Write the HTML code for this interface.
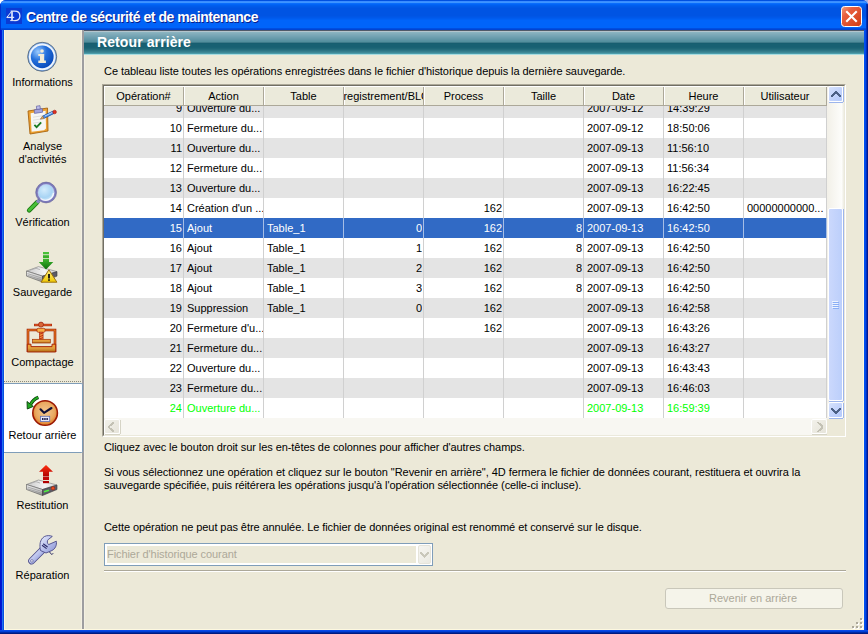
<!DOCTYPE html>
<html><head><meta charset="utf-8"><style>
*{box-sizing:border-box}
html,body{margin:0;padding:0;background:#fff;width:868px;height:634px;overflow:hidden}
body{font-family:"Liberation Sans",sans-serif;font-size:11px;line-height:13px;color:#000;position:relative}
.a{position:absolute}
#win{position:absolute;left:0;top:0;width:868px;height:634px;background:#0831d9;border-radius:6px 6px 0 0;overflow:hidden}
#title{position:absolute;left:0;top:0;width:868px;height:30px;background:linear-gradient(to bottom,#0050e0 0px,#0050e0 1px,#3a8cff 1px,#3a8cff 2px,#3d95ff 2px,#3d95ff 3px,#0a6cfc 3px,#0a6cfc 4px,#0064f6 4px,#0064f6 5px,#005eee 5px,#005eee 6px,#005aea 6px,#005aea 7px,#0057e6 7px,#0057e6 8px,#0054e3 8px,#0054e3 9px,#0054e3 9px,#0054e3 10px,#0054e3 10px,#0054e3 11px,#0054e3 11px,#0054e3 12px,#0054e3 12px,#0054e3 13px,#0054e3 13px,#0054e3 14px,#0054e3 14px,#0054e3 15px,#0054e3 15px,#0054e3 16px,#0056e6 16px,#0056e6 17px,#0058ea 17px,#0058ea 18px,#005cee 18px,#005cee 19px,#0060f4 19px,#0060f4 20px,#0064fa 20px,#0064fa 21px,#0064fa 21px,#0064fa 22px,#0064fa 22px,#0064fa 23px,#0064fa 23px,#0064fa 24px,#0064fa 24px,#0064fa 25px,#0064fa 25px,#0064fa 26px,#0064fa 26px,#0064fa 27px,#0064fa 27px,#0064fa 28px,#004ee0 28px,#004ee0 29px,#0044d4 29px,#0044d4 30px)}
#lframe{position:absolute;left:0;top:30px;width:4px;height:604px;background:linear-gradient(to right,#0014cc 0px,#0014cc 1px,#0018d4 1px,#0018d4 2px,#2070f0 2px,#2070f0 3px,#0850e0 3px)}
#rframe{position:absolute;left:864px;top:30px;width:4px;height:604px;background:linear-gradient(to right,#0050f0 0px,#0050f0 1px,#0048e8 1px,#0048e8 2px,#0030c0 2px,#0030c0 3px,#001890 3px)}
#bframe{position:absolute;left:0;top:630px;width:868px;height:4px;background:linear-gradient(to bottom,#0a4ae8 0px,#0a4ae8 1px,#0040d8 1px,#0040d8 2px,#002aa8 2px,#002aa8 3px,#001a80 3px)}
#content{position:absolute;left:4px;top:30px;width:860px;height:600px;background:#ece9d8}
.slabel{position:absolute;left:4px;width:77px;text-align:center;white-space:nowrap}
.txt{position:absolute;white-space:nowrap}
#table{position:absolute;left:102px;top:84px;width:744px;height:353px;background:#fff;
 border-left:1px solid #aca899;border-top:1px solid #aca899;border-right:1px solid #fff;border-bottom:1px solid #fff}
#tin{position:absolute;left:0;top:0;width:742px;height:351px;border-left:1px solid #716f64;border-top:1px solid #716f64;border-right:1px solid #ebe9dc;border-bottom:1px solid #ebe9dc}
#hdr{position:absolute;left:104px;top:86px;width:723px;height:20px;background:#ebeadb;border-top:1px solid #fff;overflow:hidden}
#hdr .hb{position:absolute;left:0;top:18px;width:723px;height:1px;background:#aca899}
.hc{position:absolute;top:-1px;height:19px;overflow:hidden}
.hc span{position:absolute;left:-60px;right:-60px;top:4px;text-align:center;white-space:nowrap}
.hs{position:absolute;top:-1px;width:1px;height:19px;background:#aca899}
.hw{position:absolute;top:-1px;width:1px;height:19px;background:#fff}
#rows{position:absolute;left:104px;top:106px;width:723px;height:312px;overflow:hidden;background:#fff}
.row{position:absolute;left:0;width:723px;height:20px}
.gl{position:absolute;top:0;width:1px;height:20px}
.cell{position:absolute;top:4px;height:13px;white-space:nowrap;overflow:hidden}
.cell.r{text-align:right}
</style></head><body>
<div class="a" style="left:856px;top:0;width:12px;height:8px;background:#a4b4e4"></div>
<div id="win">
 <div id="title"></div>
 <div id="lframe"></div><div id="rframe"></div><div id="bframe"></div>
 <div id="content"></div>
 <div class="a" style="left:0;top:4px;width:1px;height:26px;background:#0028c8;opacity:0.8"></div>
 <div class="a" style="left:866px;top:4px;width:1px;height:26px;background:#0030b8"></div>
 <div class="a" style="left:867px;top:4px;width:1px;height:26px;background:#001c88"></div>
</div>
<div class="txt" style="left:26px;top:9px;font:bold 14px/16px 'Liberation Sans';letter-spacing:-0.45px;color:#fff;text-shadow:1px 1px 0 #0a1e8a">Centre de sécurité et de maintenance</div>

<!-- sidebar -->
<div class="a" style="left:81px;top:30px;width:1px;height:600px;background:#f3f0e2"></div>
<div class="a" style="left:82px;top:30px;width:2px;height:600px;background:#9d9da0"></div>
<div class="a" style="left:84px;top:55px;width:1px;height:575px;background:#f3f0e2"></div>
<div class="a" style="left:4px;top:30px;width:1px;height:600px;background:#fdf8e0"></div>
<div class="a" style="left:863px;top:55px;width:1px;height:575px;background:#fdf8e0"></div>
<div class="a" style="left:4px;top:629px;width:860px;height:1px;background:#fdf8e0"></div>
<div class="a" style="left:4px;top:381px;width:78px;height:1px;background-image:linear-gradient(to right,#8c8a7c 50%,transparent 50%);background-size:2px 1px"></div>
<div class="a" style="left:4px;top:383px;width:79px;height:70px;background:#fff;border-top:1px solid #7f9db9;border-bottom:1px solid #7f9db9;border-right:1px solid #7f9db9;border-radius:0 2px 2px 0"></div>
<div class="slabel" style="top:76px">Informations</div>
<div class="slabel" style="top:140px">Analyse</div>
<div class="slabel" style="top:153px">d'activités</div>
<div class="slabel" style="top:216px">Vérification</div>
<div class="slabel" style="top:286px">Sauvegarde</div>
<div class="slabel" style="top:356px">Compactage</div>
<div class="slabel" style="top:429px">Retour arrière</div>
<div class="slabel" style="top:499px">Restitution</div>
<div class="slabel" style="top:569px">Réparation</div>

<!-- banner -->
<div class="a" style="left:84px;top:30px;width:780px;height:25px;background:linear-gradient(to bottom,#505a68 0px,#505a68 1px,#b4c4cc 1px,#b4c4cc 2px,#8ab4c0 2px,#8ab4c0 3px,#84aebc 3px,#84aebc 4px,#7eaab8 4px,#7eaab8 5px,#78a6b6 5px,#78a6b6 6px,#72a2b2 6px,#72a2b2 7px,#6c9eae 7px,#6c9eae 8px,#669aaa 8px,#669aaa 9px,#6096a6 9px,#6096a6 10px,#5a92a2 10px,#5a92a2 11px,#54909e 11px,#54909e 12px,#3e7a8a 12px,#3e7a8a 13px,#175e70 13px,#175e70 14px,#186072 14px,#186072 15px,#186072 15px,#186072 16px,#186072 16px,#186072 17px,#196274 17px,#196274 18px,#1e6676 18px,#1e6676 19px,#246c7c 19px,#246c7c 20px,#2c7484 20px,#2c7484 21px,#347e8c 21px,#347e8c 22px,#3e8896 22px,#3e8896 23px,#4a9caa 23px,#4a9caa 24px,#a8dce0 24px,#a8dce0 25px)"></div>
<div class="txt" style="left:97px;top:34px;font:bold 14px/16px 'Liberation Sans';letter-spacing:0.1px;color:#fff">Retour arrière</div>

<div class="txt" style="left:104px;top:65px;letter-spacing:-0.06px">Ce tableau liste toutes les opérations enregistrées dans le fichier d'historique depuis la dernière sauvegarde.</div>

<!-- table -->
<div id="table"><div id="tin"></div></div>
<div id="hdr"><div class="hw" style="left:0px"></div>
<div class="hc" style="left:0px;width:79px"><span>Opération#</span></div>
<div class="hs" style="left:79px"></div>
<div class="hw" style="left:80px"></div>
<div class="hc" style="left:80px;width:79px"><span>Action</span></div>
<div class="hs" style="left:159px"></div>
<div class="hw" style="left:160px"></div>
<div class="hc" style="left:160px;width:79px"><span>Table</span></div>
<div class="hs" style="left:239px"></div>
<div class="hw" style="left:240px"></div>
<div class="hc" style="left:240px;width:79px"><span>Enregistrement/BLOB</span></div>
<div class="hs" style="left:319px"></div>
<div class="hw" style="left:320px"></div>
<div class="hc" style="left:320px;width:79px"><span>Process</span></div>
<div class="hs" style="left:399px"></div>
<div class="hw" style="left:400px"></div>
<div class="hc" style="left:400px;width:79px"><span>Taille</span></div>
<div class="hs" style="left:479px"></div>
<div class="hw" style="left:480px"></div>
<div class="hc" style="left:480px;width:79px"><span>Date</span></div>
<div class="hs" style="left:559px"></div>
<div class="hw" style="left:560px"></div>
<div class="hc" style="left:560px;width:79px"><span>Heure</span></div>
<div class="hs" style="left:639px"></div>
<div class="hw" style="left:640px"></div>
<div class="hc" style="left:640px;width:82px"><span>Utilisateur</span></div>
<div class="hs" style="left:722px"></div><div class="hb"></div></div>
<div id="rows">
<div class="row" style="top:-8px;background:#e4e4e4;color:#000000">
<div class="gl" style="left:79px;background:#d0d0d0"></div>
<div class="cell r" style="left:0px;width:78px">9</div>
<div class="gl" style="left:159px;background:#d0d0d0"></div>
<div class="cell" style="left:83px;width:76px">Ouverture du...</div>
<div class="gl" style="left:239px;background:#d0d0d0"></div>
<div class="gl" style="left:319px;background:#d0d0d0"></div>
<div class="gl" style="left:399px;background:#d0d0d0"></div>
<div class="gl" style="left:479px;background:#d0d0d0"></div>
<div class="gl" style="left:559px;background:#d0d0d0"></div>
<div class="cell" style="left:483px;width:76px">2007-09-12</div>
<div class="gl" style="left:639px;background:#d0d0d0"></div>
<div class="cell" style="left:563px;width:76px">14:39:29</div>
<div class="gl" style="left:722px;background:#d0d0d0"></div>
</div>
<div class="row" style="top:12px;background:#ffffff;color:#000000">
<div class="gl" style="left:79px;background:#d0d0d0"></div>
<div class="cell r" style="left:0px;width:78px">10</div>
<div class="gl" style="left:159px;background:#d0d0d0"></div>
<div class="cell" style="left:83px;width:76px">Fermeture du...</div>
<div class="gl" style="left:239px;background:#d0d0d0"></div>
<div class="gl" style="left:319px;background:#d0d0d0"></div>
<div class="gl" style="left:399px;background:#d0d0d0"></div>
<div class="gl" style="left:479px;background:#d0d0d0"></div>
<div class="gl" style="left:559px;background:#d0d0d0"></div>
<div class="cell" style="left:483px;width:76px">2007-09-12</div>
<div class="gl" style="left:639px;background:#d0d0d0"></div>
<div class="cell" style="left:563px;width:76px">18:50:06</div>
<div class="gl" style="left:722px;background:#d0d0d0"></div>
</div>
<div class="row" style="top:32px;background:#e4e4e4;color:#000000">
<div class="gl" style="left:79px;background:#d0d0d0"></div>
<div class="cell r" style="left:0px;width:78px">11</div>
<div class="gl" style="left:159px;background:#d0d0d0"></div>
<div class="cell" style="left:83px;width:76px">Ouverture du...</div>
<div class="gl" style="left:239px;background:#d0d0d0"></div>
<div class="gl" style="left:319px;background:#d0d0d0"></div>
<div class="gl" style="left:399px;background:#d0d0d0"></div>
<div class="gl" style="left:479px;background:#d0d0d0"></div>
<div class="gl" style="left:559px;background:#d0d0d0"></div>
<div class="cell" style="left:483px;width:76px">2007-09-13</div>
<div class="gl" style="left:639px;background:#d0d0d0"></div>
<div class="cell" style="left:563px;width:76px">11:56:10</div>
<div class="gl" style="left:722px;background:#d0d0d0"></div>
</div>
<div class="row" style="top:52px;background:#ffffff;color:#000000">
<div class="gl" style="left:79px;background:#d0d0d0"></div>
<div class="cell r" style="left:0px;width:78px">12</div>
<div class="gl" style="left:159px;background:#d0d0d0"></div>
<div class="cell" style="left:83px;width:76px">Fermeture du...</div>
<div class="gl" style="left:239px;background:#d0d0d0"></div>
<div class="gl" style="left:319px;background:#d0d0d0"></div>
<div class="gl" style="left:399px;background:#d0d0d0"></div>
<div class="gl" style="left:479px;background:#d0d0d0"></div>
<div class="gl" style="left:559px;background:#d0d0d0"></div>
<div class="cell" style="left:483px;width:76px">2007-09-13</div>
<div class="gl" style="left:639px;background:#d0d0d0"></div>
<div class="cell" style="left:563px;width:76px">11:56:34</div>
<div class="gl" style="left:722px;background:#d0d0d0"></div>
</div>
<div class="row" style="top:72px;background:#e4e4e4;color:#000000">
<div class="gl" style="left:79px;background:#d0d0d0"></div>
<div class="cell r" style="left:0px;width:78px">13</div>
<div class="gl" style="left:159px;background:#d0d0d0"></div>
<div class="cell" style="left:83px;width:76px">Ouverture du...</div>
<div class="gl" style="left:239px;background:#d0d0d0"></div>
<div class="gl" style="left:319px;background:#d0d0d0"></div>
<div class="gl" style="left:399px;background:#d0d0d0"></div>
<div class="gl" style="left:479px;background:#d0d0d0"></div>
<div class="gl" style="left:559px;background:#d0d0d0"></div>
<div class="cell" style="left:483px;width:76px">2007-09-13</div>
<div class="gl" style="left:639px;background:#d0d0d0"></div>
<div class="cell" style="left:563px;width:76px">16:22:45</div>
<div class="gl" style="left:722px;background:#d0d0d0"></div>
</div>
<div class="row" style="top:92px;background:#ffffff;color:#000000">
<div class="gl" style="left:79px;background:#d0d0d0"></div>
<div class="cell r" style="left:0px;width:78px">14</div>
<div class="gl" style="left:159px;background:#d0d0d0"></div>
<div class="cell" style="left:83px;width:76px">Création d'un ...</div>
<div class="gl" style="left:239px;background:#d0d0d0"></div>
<div class="gl" style="left:319px;background:#d0d0d0"></div>
<div class="gl" style="left:399px;background:#d0d0d0"></div>
<div class="cell r" style="left:320px;width:78px">162</div>
<div class="gl" style="left:479px;background:#d0d0d0"></div>
<div class="gl" style="left:559px;background:#d0d0d0"></div>
<div class="cell" style="left:483px;width:76px">2007-09-13</div>
<div class="gl" style="left:639px;background:#d0d0d0"></div>
<div class="cell" style="left:563px;width:76px">16:42:50</div>
<div class="gl" style="left:722px;background:#d0d0d0"></div>
<div class="cell" style="left:643px;width:79px">00000000000...</div>
</div>
<div class="row" style="top:112px;background:#316ac5;color:#ffffff">
<div class="gl" style="left:79px;background:#a5bde5"></div>
<div class="cell r" style="left:0px;width:78px">15</div>
<div class="gl" style="left:159px;background:#a5bde5"></div>
<div class="cell" style="left:83px;width:76px">Ajout</div>
<div class="gl" style="left:239px;background:#a5bde5"></div>
<div class="cell" style="left:163px;width:76px">Table_1</div>
<div class="gl" style="left:319px;background:#a5bde5"></div>
<div class="cell r" style="left:240px;width:78px">0</div>
<div class="gl" style="left:399px;background:#a5bde5"></div>
<div class="cell r" style="left:320px;width:78px">162</div>
<div class="gl" style="left:479px;background:#a5bde5"></div>
<div class="cell r" style="left:400px;width:78px">8</div>
<div class="gl" style="left:559px;background:#a5bde5"></div>
<div class="cell" style="left:483px;width:76px">2007-09-13</div>
<div class="gl" style="left:639px;background:#a5bde5"></div>
<div class="cell" style="left:563px;width:76px">16:42:50</div>
<div class="gl" style="left:722px;background:#a5bde5"></div>
</div>
<div class="row" style="top:132px;background:#ffffff;color:#000000">
<div class="gl" style="left:79px;background:#d0d0d0"></div>
<div class="cell r" style="left:0px;width:78px">16</div>
<div class="gl" style="left:159px;background:#d0d0d0"></div>
<div class="cell" style="left:83px;width:76px">Ajout</div>
<div class="gl" style="left:239px;background:#d0d0d0"></div>
<div class="cell" style="left:163px;width:76px">Table_1</div>
<div class="gl" style="left:319px;background:#d0d0d0"></div>
<div class="cell r" style="left:240px;width:78px">1</div>
<div class="gl" style="left:399px;background:#d0d0d0"></div>
<div class="cell r" style="left:320px;width:78px">162</div>
<div class="gl" style="left:479px;background:#d0d0d0"></div>
<div class="cell r" style="left:400px;width:78px">8</div>
<div class="gl" style="left:559px;background:#d0d0d0"></div>
<div class="cell" style="left:483px;width:76px">2007-09-13</div>
<div class="gl" style="left:639px;background:#d0d0d0"></div>
<div class="cell" style="left:563px;width:76px">16:42:50</div>
<div class="gl" style="left:722px;background:#d0d0d0"></div>
</div>
<div class="row" style="top:152px;background:#e4e4e4;color:#000000">
<div class="gl" style="left:79px;background:#d0d0d0"></div>
<div class="cell r" style="left:0px;width:78px">17</div>
<div class="gl" style="left:159px;background:#d0d0d0"></div>
<div class="cell" style="left:83px;width:76px">Ajout</div>
<div class="gl" style="left:239px;background:#d0d0d0"></div>
<div class="cell" style="left:163px;width:76px">Table_1</div>
<div class="gl" style="left:319px;background:#d0d0d0"></div>
<div class="cell r" style="left:240px;width:78px">2</div>
<div class="gl" style="left:399px;background:#d0d0d0"></div>
<div class="cell r" style="left:320px;width:78px">162</div>
<div class="gl" style="left:479px;background:#d0d0d0"></div>
<div class="cell r" style="left:400px;width:78px">8</div>
<div class="gl" style="left:559px;background:#d0d0d0"></div>
<div class="cell" style="left:483px;width:76px">2007-09-13</div>
<div class="gl" style="left:639px;background:#d0d0d0"></div>
<div class="cell" style="left:563px;width:76px">16:42:50</div>
<div class="gl" style="left:722px;background:#d0d0d0"></div>
</div>
<div class="row" style="top:172px;background:#ffffff;color:#000000">
<div class="gl" style="left:79px;background:#d0d0d0"></div>
<div class="cell r" style="left:0px;width:78px">18</div>
<div class="gl" style="left:159px;background:#d0d0d0"></div>
<div class="cell" style="left:83px;width:76px">Ajout</div>
<div class="gl" style="left:239px;background:#d0d0d0"></div>
<div class="cell" style="left:163px;width:76px">Table_1</div>
<div class="gl" style="left:319px;background:#d0d0d0"></div>
<div class="cell r" style="left:240px;width:78px">3</div>
<div class="gl" style="left:399px;background:#d0d0d0"></div>
<div class="cell r" style="left:320px;width:78px">162</div>
<div class="gl" style="left:479px;background:#d0d0d0"></div>
<div class="cell r" style="left:400px;width:78px">8</div>
<div class="gl" style="left:559px;background:#d0d0d0"></div>
<div class="cell" style="left:483px;width:76px">2007-09-13</div>
<div class="gl" style="left:639px;background:#d0d0d0"></div>
<div class="cell" style="left:563px;width:76px">16:42:50</div>
<div class="gl" style="left:722px;background:#d0d0d0"></div>
</div>
<div class="row" style="top:192px;background:#e4e4e4;color:#000000">
<div class="gl" style="left:79px;background:#d0d0d0"></div>
<div class="cell r" style="left:0px;width:78px">19</div>
<div class="gl" style="left:159px;background:#d0d0d0"></div>
<div class="cell" style="left:83px;width:76px">Suppression</div>
<div class="gl" style="left:239px;background:#d0d0d0"></div>
<div class="cell" style="left:163px;width:76px">Table_1</div>
<div class="gl" style="left:319px;background:#d0d0d0"></div>
<div class="cell r" style="left:240px;width:78px">0</div>
<div class="gl" style="left:399px;background:#d0d0d0"></div>
<div class="cell r" style="left:320px;width:78px">162</div>
<div class="gl" style="left:479px;background:#d0d0d0"></div>
<div class="gl" style="left:559px;background:#d0d0d0"></div>
<div class="cell" style="left:483px;width:76px">2007-09-13</div>
<div class="gl" style="left:639px;background:#d0d0d0"></div>
<div class="cell" style="left:563px;width:76px">16:42:58</div>
<div class="gl" style="left:722px;background:#d0d0d0"></div>
</div>
<div class="row" style="top:212px;background:#ffffff;color:#000000">
<div class="gl" style="left:79px;background:#d0d0d0"></div>
<div class="cell r" style="left:0px;width:78px">20</div>
<div class="gl" style="left:159px;background:#d0d0d0"></div>
<div class="cell" style="left:83px;width:76px">Fermeture d'u...</div>
<div class="gl" style="left:239px;background:#d0d0d0"></div>
<div class="gl" style="left:319px;background:#d0d0d0"></div>
<div class="gl" style="left:399px;background:#d0d0d0"></div>
<div class="cell r" style="left:320px;width:78px">162</div>
<div class="gl" style="left:479px;background:#d0d0d0"></div>
<div class="gl" style="left:559px;background:#d0d0d0"></div>
<div class="cell" style="left:483px;width:76px">2007-09-13</div>
<div class="gl" style="left:639px;background:#d0d0d0"></div>
<div class="cell" style="left:563px;width:76px">16:43:26</div>
<div class="gl" style="left:722px;background:#d0d0d0"></div>
</div>
<div class="row" style="top:232px;background:#e4e4e4;color:#000000">
<div class="gl" style="left:79px;background:#d0d0d0"></div>
<div class="cell r" style="left:0px;width:78px">21</div>
<div class="gl" style="left:159px;background:#d0d0d0"></div>
<div class="cell" style="left:83px;width:76px">Fermeture du...</div>
<div class="gl" style="left:239px;background:#d0d0d0"></div>
<div class="gl" style="left:319px;background:#d0d0d0"></div>
<div class="gl" style="left:399px;background:#d0d0d0"></div>
<div class="gl" style="left:479px;background:#d0d0d0"></div>
<div class="gl" style="left:559px;background:#d0d0d0"></div>
<div class="cell" style="left:483px;width:76px">2007-09-13</div>
<div class="gl" style="left:639px;background:#d0d0d0"></div>
<div class="cell" style="left:563px;width:76px">16:43:27</div>
<div class="gl" style="left:722px;background:#d0d0d0"></div>
</div>
<div class="row" style="top:252px;background:#ffffff;color:#000000">
<div class="gl" style="left:79px;background:#d0d0d0"></div>
<div class="cell r" style="left:0px;width:78px">22</div>
<div class="gl" style="left:159px;background:#d0d0d0"></div>
<div class="cell" style="left:83px;width:76px">Ouverture du...</div>
<div class="gl" style="left:239px;background:#d0d0d0"></div>
<div class="gl" style="left:319px;background:#d0d0d0"></div>
<div class="gl" style="left:399px;background:#d0d0d0"></div>
<div class="gl" style="left:479px;background:#d0d0d0"></div>
<div class="gl" style="left:559px;background:#d0d0d0"></div>
<div class="cell" style="left:483px;width:76px">2007-09-13</div>
<div class="gl" style="left:639px;background:#d0d0d0"></div>
<div class="cell" style="left:563px;width:76px">16:43:43</div>
<div class="gl" style="left:722px;background:#d0d0d0"></div>
</div>
<div class="row" style="top:272px;background:#e4e4e4;color:#000000">
<div class="gl" style="left:79px;background:#d0d0d0"></div>
<div class="cell r" style="left:0px;width:78px">23</div>
<div class="gl" style="left:159px;background:#d0d0d0"></div>
<div class="cell" style="left:83px;width:76px">Fermeture du...</div>
<div class="gl" style="left:239px;background:#d0d0d0"></div>
<div class="gl" style="left:319px;background:#d0d0d0"></div>
<div class="gl" style="left:399px;background:#d0d0d0"></div>
<div class="gl" style="left:479px;background:#d0d0d0"></div>
<div class="gl" style="left:559px;background:#d0d0d0"></div>
<div class="cell" style="left:483px;width:76px">2007-09-13</div>
<div class="gl" style="left:639px;background:#d0d0d0"></div>
<div class="cell" style="left:563px;width:76px">16:46:03</div>
<div class="gl" style="left:722px;background:#d0d0d0"></div>
</div>
<div class="row" style="top:292px;background:#ffffff;color:#00ff00">
<div class="gl" style="left:79px;background:#d0d0d0"></div>
<div class="cell r" style="left:0px;width:78px">24</div>
<div class="gl" style="left:159px;background:#d0d0d0"></div>
<div class="cell" style="left:83px;width:76px">Ouverture du...</div>
<div class="gl" style="left:239px;background:#d0d0d0"></div>
<div class="gl" style="left:319px;background:#d0d0d0"></div>
<div class="gl" style="left:399px;background:#d0d0d0"></div>
<div class="gl" style="left:479px;background:#d0d0d0"></div>
<div class="gl" style="left:559px;background:#d0d0d0"></div>
<div class="cell" style="left:483px;width:76px">2007-09-13</div>
<div class="gl" style="left:639px;background:#d0d0d0"></div>
<div class="cell" style="left:563px;width:76px">16:59:39</div>
<div class="gl" style="left:722px;background:#d0d0d0"></div>
</div>
</div>
<div class="a" style="left:827px;top:86px;width:17px;height:333px;background:linear-gradient(to right,#f2f0e8 0px,#fdfdfb 15px,#f0efe6 16px,#f0efe6 17px)"></div><div class="a" style="left:828px;top:86px;width:15px;height:16px;border:1px solid #fff;border-radius:2px;background:linear-gradient(135deg,#d6e2fd 0%,#c4d4fb 50%,#b4c9fb 100%)"></div><div class="a" style="left:829px;top:102px;width:14px;height:1px;background:#9db5ec"></div><div class="a" style="left:843px;top:87px;width:1px;height:15px;background:#9db5ec"></div><div class="a" style="left:828px;top:208px;width:15px;height:193px;border:1px solid #fff;border-radius:2px;background:linear-gradient(to right,#cbd8fc,#bccffb)"></div><div class="a" style="left:829px;top:401px;width:14px;height:1px;background:#9db5ec"></div><div class="a" style="left:843px;top:209px;width:1px;height:192px;background:#9db5ec"></div><div class="a" style="left:828px;top:402px;width:15px;height:16px;border:1px solid #fff;border-radius:2px;background:linear-gradient(135deg,#d6e2fd 0%,#c4d4fb 50%,#b4c9fb 100%)"></div><div class="a" style="left:829px;top:418px;width:14px;height:1px;background:#9db5ec"></div><div class="a" style="left:843px;top:403px;width:1px;height:15px;background:#9db5ec"></div><div class="a" style="left:104px;top:418px;width:723px;height:17px;background:#f8f7f2"></div><div class="a" style="left:104px;top:419px;width:16px;height:15px;border:1px solid #fff;border-radius:2px;background:linear-gradient(135deg,#f2f1ea,#e6e4da)"></div><div class="a" style="left:105px;top:434px;width:15px;height:1px;background:#d6d4c6"></div><div class="a" style="left:120px;top:420px;width:1px;height:14px;background:#d6d4c6"></div><div class="a" style="left:811px;top:419px;width:16px;height:15px;border:1px solid #fff;border-radius:2px;background:linear-gradient(135deg,#f2f1ea,#e6e4da)"></div><div class="a" style="left:812px;top:434px;width:15px;height:1px;background:#d6d4c6"></div><div class="a" style="left:827px;top:420px;width:1px;height:14px;background:#d6d4c6"></div><div class="a" style="left:827px;top:419px;width:18px;height:17px;background:#ece9d8"></div>

<div class="txt" style="left:104px;top:441px;letter-spacing:-0.07px">Cliquez avec le bouton droit sur les en-têtes de colonnes pour afficher d'autres champs.</div>
<div class="txt" style="left:104px;top:466px;letter-spacing:-0.05px">Si vous sélectionnez une opération et cliquez sur le bouton "Revenir en arrière", 4D fermera le fichier de données courant, restituera et ouvrira la</div>
<div class="txt" style="left:104px;top:479px;letter-spacing:-0.09px">sauvegarde spécifiée, puis réitérera les opérations jusqu'à l'opération sélectionnée (celle-ci incluse).</div>
<div class="txt" style="left:104px;top:521px;letter-spacing:-0.07px">Cette opération ne peut pas être annulée. Le fichier de données original est renommé et conservé sur le disque.</div>

<!-- combo -->
<div class="a" style="left:104px;top:543px;width:329px;height:23px;border:1px solid #7f9db9;background:#fff"></div>
<div class="a" style="left:107px;top:546px;width:309px;height:17px;background:#ece9d8"></div>
<div class="txt" style="left:107px;top:548px;letter-spacing:-0.07px;color:#aca899">Fichier d'historique courant</div>
<div class="a" style="left:418px;top:545px;width:13px;height:19px;border:1px solid #e6e4da;border-radius:2px;background:linear-gradient(135deg,#f6f5f0,#ebeae2)"></div>
<!-- separator -->
<div class="a" style="left:104px;top:570px;width:742px;height:1px;background:#aca899"></div>
<div class="a" style="left:104px;top:571px;width:742px;height:1px;background:#fff"></div>
<!-- button -->
<div class="a" style="left:665px;top:588px;width:178px;height:21px;border:1px solid #c9c7ba;border-radius:3px;background:#f5f4ea"></div>
<div class="txt" style="left:664px;top:592px;width:178px;text-align:center;color:#aca899">Revenir en arrière</div>
<svg class="a" style="left:0;top:0" width="868" height="634" viewBox="0 0 868 634">
<defs>
 <radialGradient id="gInfo" cx="0.32" cy="0.28" r="0.75">
  <stop offset="0" stop-color="#9cccff"/><stop offset="0.5" stop-color="#2470dc"/><stop offset="1" stop-color="#0a4cbc"/>
 </radialGradient>
 <linearGradient id="gRing" x1="0" y1="0" x2="1" y2="1">
  <stop offset="0" stop-color="#8ab8f0"/><stop offset="1" stop-color="#3a70c0"/>
 </linearGradient>
 <radialGradient id="gLens" cx="0.4" cy="0.35" r="0.7">
  <stop offset="0" stop-color="#d4ecfc"/><stop offset="0.6" stop-color="#a8d4f4"/><stop offset="1" stop-color="#e8f4fc"/>
 </radialGradient>
 <linearGradient id="gGreenArrow" x1="0" y1="0" x2="0" y2="1">
  <stop offset="0" stop-color="#40b830"/><stop offset="1" stop-color="#0a6e0a"/>
 </linearGradient>
 <linearGradient id="gRedArrow" x1="0" y1="0" x2="0" y2="1">
  <stop offset="0" stop-color="#ff3010"/><stop offset="1" stop-color="#b00000"/>
 </linearGradient>
 <linearGradient id="gDriveTop" x1="0" y1="0" x2="1" y2="0">
  <stop offset="0" stop-color="#c8c8c8"/><stop offset="0.6" stop-color="#f4f4f4"/><stop offset="1" stop-color="#d0d0d0"/>
 </linearGradient>
 <linearGradient id="gDriveFront" x1="0" y1="0" x2="0" y2="1">
  <stop offset="0" stop-color="#f0f0f0"/><stop offset="0.6" stop-color="#c8c8c8"/><stop offset="1" stop-color="#8a8a8a"/>
 </linearGradient>
 <linearGradient id="gYellow" x1="0" y1="0" x2="0" y2="1">
  <stop offset="0" stop-color="#fff080"/><stop offset="1" stop-color="#f0c800"/>
 </linearGradient>
 <linearGradient id="gGold" x1="0" y1="0" x2="0" y2="1">
  <stop offset="0" stop-color="#f8a030"/><stop offset="0.5" stop-color="#e0a040"/><stop offset="1" stop-color="#b06a10"/>
 </linearGradient>
 <radialGradient id="gClock" cx="0.5" cy="0.45" r="0.55">
  <stop offset="0" stop-color="#f4c890"/><stop offset="0.7" stop-color="#e8a860"/><stop offset="1" stop-color="#e07820"/>
 </radialGradient>
 <linearGradient id="gWrench" x1="0" y1="0" x2="1" y2="1">
  <stop offset="0" stop-color="#e8ecfc"/><stop offset="0.5" stop-color="#b8c0ec"/><stop offset="1" stop-color="#8890d0"/>
 </linearGradient>
 <linearGradient id="gClose" x1="0" y1="0" x2="1" y2="1">
  <stop offset="0" stop-color="#f0a080"/><stop offset="0.3" stop-color="#e86040"/><stop offset="1" stop-color="#d03a10"/>
 </linearGradient>
</defs>

<!-- 4D logo -->
<rect x="6" y="8" width="16" height="16" fill="#0b3ad4"/>
<g fill="none" stroke="#dfe6fa" stroke-linecap="butt">
 <path d="M12 11.3 V20.4" stroke-width="1.7"/>
 <path d="M10.2 20.6 H15" stroke-width="1"/>
 <path d="M10.6 11.2 H14.6 C18.4 11.2 19.9 13.4 19.9 15.9 C19.9 18.6 18.2 20.6 14.6 20.6" stroke-width="1.25"/>
 <path d="M7 17.2 L11.6 11.4" stroke-width="1"/>
 <path d="M6.6 17.4 H14.2" stroke-width="1.3"/>
</g>
<!-- close button -->
<rect x="841.5" y="6.5" width="20" height="20" rx="3" fill="url(#gClose)" stroke="#fff" stroke-width="1"/>
<path d="M847 12 L856 21 M856 12 L847 21" stroke="#fff" stroke-width="2.1" stroke-linecap="square"/>

<!-- Informations icon -->
<circle cx="42.2" cy="56.8" r="14.5" fill="#78aaee" stroke="#5a6a7a" stroke-width="0.9"/>
<circle cx="42.2" cy="56.8" r="13.3" fill="#eef4fc"/>
<circle cx="42.2" cy="56.8" r="11.4" fill="url(#gInfo)"/>
<circle cx="42" cy="51" r="1.8" fill="#f2ecd8"/>
<path d="M38.3 54 H44.2 V60.6 H45.9 V63 H38.3 V60.6 H40 V56 H38.3 Z" fill="#f2ecd8"/>

<!-- Analyse icon: clipboard -->
<g>
 <path d="M28 111 L47.5 108 L48 131 L30 134 Z" fill="#eca030" stroke="#a86410" stroke-width="0.9" stroke-linejoin="round"/>
 <path d="M30.6 113.2 L45.6 110.7 L46 128.5 L44 130.2 L31.6 131.8 Z" fill="#f6f6f4"/>
 <path d="M33 117.2 L43 115.7 M33 120.2 L43 118.7 M33 123.2 L40 122.1" stroke="#d4d4d4" stroke-width="0.7"/>
 <path d="M34.2 109.8 L42.3 108.6 L42.6 112.2 L34.5 113.4 Z" fill="#a4a4dc" stroke="#5e5ea0" stroke-width="0.7"/>
 <path d="M36.4 106.2 L40 105.7 L40.3 109 L36.7 109.4 Z" fill="#c0c0ec" stroke="#5e5ea0" stroke-width="0.7"/>
 <path d="M34.4 124.9 L36.6 127.2 L41.2 122.4" fill="none" stroke="#1a7a22" stroke-width="1.8"/>
 <path d="M43.2 117.3 L53.6 112.2" stroke="#1c4a98" stroke-width="3.2" stroke-linecap="butt"/>
 <path d="M43.2 117.3 L53.6 112.2" stroke="#4a90e8" stroke-width="2.1" stroke-linecap="butt"/>
 <path d="M45 116 L52.5 112.3" stroke="#e8f0ff" stroke-width="0.7"/>
 <path d="M40.3 119.2 L42.6 116 L44 118.6 Z" fill="#e0a868" stroke="#7a5020" stroke-width="0.5" stroke-linejoin="round"/>
 <circle cx="54.6" cy="112" r="1.8" fill="#e03020" stroke="#a01810" stroke-width="0.6"/>
</g>

<!-- Verification: magnifier -->
<path d="M29.2 210.3 L37.3 202.2" stroke="#1c7a10" stroke-width="4.6" stroke-linecap="round"/>
<path d="M29.2 210.3 L37.3 202.2" stroke="#48c038" stroke-width="2.8" stroke-linecap="round"/>
<path d="M37 202.5 L39.5 200" stroke="#8a88c0" stroke-width="3.5"/>
<circle cx="46.1" cy="192.5" r="9.3" fill="url(#gLens)" stroke="#7c7abc" stroke-width="2.2"/>
<circle cx="46.1" cy="192.5" r="10.4" fill="none" stroke="#5c5a94" stroke-width="0.6"/>
<circle cx="46.1" cy="192.5" r="8.1" fill="none" stroke="#c8c8ec" stroke-width="0.5"/>
<path d="M40.5 198.5 A8 8 0 0 0 53.5 193" fill="none" stroke="#fff" stroke-width="1.4" opacity="0.8"/>

<!-- Sauvegarde: drive + green arrow + warning -->
<g>
 <g transform="translate(0,-213.4)"><g class="drive">
 <path d="M26.5 484.5 L38.5 480 L57 485 L42.5 489.5 Z" fill="url(#gDriveTop)" stroke="#7a7a7a" stroke-width="0.6" stroke-linejoin="round"/>
 <path d="M26.5 484.5 L42.5 489.5 L42.5 495.5 L26.5 489.5 Z" fill="url(#gDriveFront)" stroke="#555" stroke-width="0.6" stroke-linejoin="round"/>
 <path d="M42.5 489.5 L57 485 L57 489.5 L42.5 495.5 Z" fill="#5c5c68" stroke="#3a3a3a" stroke-width="0.6" stroke-linejoin="round"/>
 <path d="M27.5 487 L42 491.5 M27.5 488.8 L42 493.3" stroke="#8a8a8a" stroke-width="0.6"/>
 <path d="M30 483.5 L36 481.7 L40 483" stroke="#a8a8a8" stroke-width="0.8" fill="none"/>
</g></g>
 <rect x="43" y="252" width="6" height="2.3" fill="#48c038"/>
 <rect x="43" y="255.2" width="6" height="2.8" fill="#38b028"/>
 <path d="M43 258.8 H49 V262 H53.3 L46 269.5 L38.8 262 H43 Z" fill="url(#gGreenArrow)"/>
 <path d="M48.9 269.8 L56.9 282.2 L41 282.2 Z" fill="url(#gYellow)" stroke="#9a7010" stroke-width="1" stroke-linejoin="round"/>
 <rect x="48.1" y="274" width="1.8" height="4.5" fill="#101010"/>
 <rect x="48.1" y="279.3" width="1.8" height="1.5" fill="#101010"/>
</g>

<!-- Compactage: press -->
<g>
 <path d="M34 325 H52" stroke="#a82008" stroke-width="2.4"/>
 <path d="M34.5 325 H51.5" stroke="#f07030" stroke-width="1"/>
 <circle cx="41" cy="324.6" r="2.5" fill="#d86838" stroke="#981808" stroke-width="0.7"/>
 <path d="M28 352 V330 H55 V352" fill="none" stroke="#a01c04" stroke-width="2.6"/>
 <path d="M28 352 V330 H55 V352" fill="none" stroke="#f08a28" stroke-width="1.1"/>
 <rect x="37" y="328.3" width="8" height="4" rx="1.2" fill="#f8b048" stroke="#a82808" stroke-width="0.7"/>
 <rect x="39.3" y="332.2" width="3.8" height="7.3" fill="#f09038" stroke="#a82010" stroke-width="0.6"/>
 <path d="M39.4 334.3 L43 332.8 M39.4 336.8 L43 335.3 M39.4 339 L43 337.6" stroke="#b82010" stroke-width="0.9"/>
 <rect x="32.5" y="339.3" width="17.8" height="3.7" fill="url(#gGold)" stroke="#a03008" stroke-width="0.7"/>
 <path d="M27.3 344.2 H31 V346.6 H52 V344.2 H55.7 V352 H27.3 Z" fill="url(#gGold)" stroke="#a01c04" stroke-width="0.9" stroke-linejoin="round"/>
</g>

<!-- Retour arriere: clock + green arrow -->
<g>
 <circle cx="45.1" cy="413" r="12.3" fill="url(#gClock)" stroke="#9a1804" stroke-width="1.6"/>
 <path d="M40.5 409.3 L44 412.8 L51.5 408" fill="none" stroke="#101038" stroke-width="2.1" stroke-linecap="round" stroke-linejoin="round"/>
 <rect x="40.4" y="416.3" width="9.3" height="5.2" fill="#e8e8f8" stroke="#6070b8" stroke-width="0.8"/>
 <path d="M42 418 h1.5 v2 h-1.5z M44.2 418 h1.5 v2 h-1.5z M46.4 418 h1.5 v2 h-1.5z" fill="#202050"/>
 <path d="M38.4 397.3 Q33 399.3 30.3 404.8" fill="none" stroke="#0a400a" stroke-width="3.4"/>
 <path d="M27 401.5 L27.3 409 L33.3 406.4 Z" fill="#20a820" stroke="#0a400a" stroke-width="0.9" stroke-linejoin="round"/>
 <path d="M38.2 397.4 Q33 399.5 30.6 404.5" fill="none" stroke="#22aa22" stroke-width="1.7"/>
</g>

<!-- Restitution: drive + red arrow -->
<g>
<g class="drive">
 <path d="M26.5 484.5 L38.5 480 L57 485 L42.5 489.5 Z" fill="url(#gDriveTop)" stroke="#7a7a7a" stroke-width="0.6" stroke-linejoin="round"/>
 <path d="M26.5 484.5 L42.5 489.5 L42.5 495.5 L26.5 489.5 Z" fill="url(#gDriveFront)" stroke="#555" stroke-width="0.6" stroke-linejoin="round"/>
 <path d="M42.5 489.5 L57 485 L57 489.5 L42.5 495.5 Z" fill="#5c5c68" stroke="#3a3a3a" stroke-width="0.6" stroke-linejoin="round"/>
 <path d="M27.5 487 L42 491.5 M27.5 488.8 L42 493.3" stroke="#8a8a8a" stroke-width="0.6"/>
 <path d="M30 483.5 L36 481.7 L40 483" stroke="#a8a8a8" stroke-width="0.8" fill="none"/>
</g>
 <path d="M44 491.8 L49 490.2" stroke="#50f040" stroke-width="1.6"/>
 <circle cx="53" cy="488.3" r="1.7" fill="#e85020" stroke="#a01000" stroke-width="0.5"/>
 <path d="M46 465 L53 471.7 H49 V476.5 H43 V471.7 H39 Z" fill="url(#gRedArrow)"/>
 <rect x="43" y="477" width="6" height="3" fill="#c00808"/>
 <rect x="43" y="481" width="6" height="2.2" fill="#b00000"/>
</g>

<!-- Reparation: wrench -->
<g>
 <path d="M31.7 560.9 L42.5 550" stroke="#4a4a88" stroke-width="7" stroke-linecap="round"/>
 <path d="M31.7 560.9 L42.5 550" stroke="url(#gWrench)" stroke-width="5.4" stroke-linecap="round"/>
 <path d="M40.5 550.5 C39.3 545 39.8 539.5 44.3 536.6 C46.8 535.3 50 535.3 52.3 536.4 L48.2 539.6 C46.8 541 47.1 543.2 48.6 544.6 L56.3 541.2 C57 545.3 55.3 548.8 52 550.5 L46 553 Z" fill="url(#gWrench)" stroke="#4a4a88" stroke-width="0.9" stroke-linejoin="round"/>
 <path d="M42 545.3 L46.6 548.6 M43.2 543.8 L47.6 547" stroke="#2a2a68" stroke-width="1.1"/>
 <path d="M49.5 552 L51.8 554.6 L53.2 553.2" stroke="#2a2a60" stroke-width="1" fill="none"/>
 <circle cx="31.9" cy="560.9" r="1.3" fill="#eef0fa" stroke="#4a4a88" stroke-width="0.6"/>
</g>

<!-- size grip -->
<g fill="#fff"><rect x="861" y="619" width="2" height="2"/><rect x="857" y="623" width="2" height="2"/><rect x="861" y="623" width="2" height="2"/><rect x="853" y="627" width="2" height="2"/><rect x="857" y="627" width="2" height="2"/><rect x="861" y="627" width="2" height="2"/></g>
<g fill="#aca899"><rect x="860" y="618" width="2" height="2"/><rect x="856" y="622" width="2" height="2"/><rect x="860" y="622" width="2" height="2"/><rect x="852" y="626" width="2" height="2"/><rect x="856" y="626" width="2" height="2"/><rect x="860" y="626" width="2" height="2"/></g>
<path d="M832 301h6v1h-6zM832 303h6v1h-6zM832 305h6v1h-6zM832 307h6v1h-6z" fill="#eef3fe" shape-rendering="crispEdges"/><path d="M833 302h6v1h-6zM833 304h6v1h-6zM833 306h6v1h-6zM833 308h6v1h-6z" fill="#8aaef6" shape-rendering="crispEdges"/><path d="M835 91h2v1h-2zM834 92h4v1h-4zM833 93h6v1h-6zM832 94h3v1h-3zM837 94h3v1h-3zM831 95h3v1h-3zM838 95h3v1h-3zM831 96h2v1h-2zM839 96h2v1h-2zM831 408h2v1h-2zM839 408h2v1h-2zM831 409h3v1h-3zM838 409h3v1h-3zM832 410h3v1h-3zM837 410h3v1h-3zM833 411h6v1h-6zM834 412h4v1h-4zM835 413h2v1h-2z" fill="#4d6185" shape-rendering="crispEdges"/><path d="M108 426h2v1h-2zM108 427h2v1h-2zM109 425h3v1h-3zM109 428h3v1h-3zM110 424h3v1h-3zM110 429h3v1h-3zM111 423h3v1h-3zM111 430h3v1h-3zM112 422h2v1h-2zM112 431h2v1h-2zM817 422h2v1h-2zM817 431h2v1h-2zM818 423h3v1h-3zM818 430h3v1h-3zM819 424h3v1h-3zM819 429h3v1h-3zM820 425h3v1h-3zM820 428h3v1h-3zM821 426h2v1h-2zM821 427h2v1h-2z" fill="#c3c1b4" shape-rendering="crispEdges"/><path d="M420 552h2v1h-2zM427 552h2v1h-2zM420 553h3v1h-3zM426 553h3v1h-3zM421 554h3v1h-3zM425 554h3v1h-3zM422 555h5v1h-5zM423 556h3v1h-3zM424 557h1v1h-1z" fill="#c9c7ba" shape-rendering="crispEdges"/></svg>

</body></html>
